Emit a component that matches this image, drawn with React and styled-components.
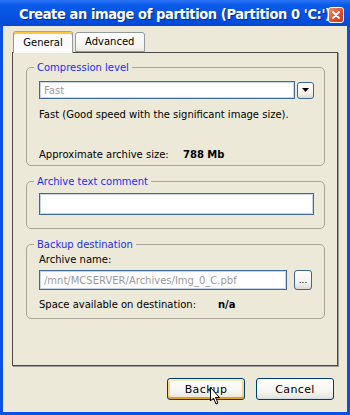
import React from "react";
import styled, { createGlobalStyle } from "styled-components";

const GlobalStyle = createGlobalStyle`
  html, body { margin: 0; padding: 0; width: 350px; height: 415px; overflow: hidden; background: #ECE9D8; }
  body { font-family: "DejaVu Sans", Verdana, sans-serif; font-size: 10px; color: #000; }
  * { box-sizing: border-box; }
`;

const Window = styled.div`
  width: 350px;
  height: 415px;
  display: flex;
  flex-direction: column;
`;

const TitleBar = styled.div`
  height: 26px;
  flex: none;
  display: flex;
  align-items: center;
  padding: 0 6px 0 19px;
  background: linear-gradient(180deg, #2a72f6 0%, #0a5ae8 20%, #0450e0 70%, #0348d4 100%);
`;

const TitleText = styled.div`
  flex: 1;
  min-width: 0;
  overflow: hidden;
  white-space: nowrap;
  color: #fff;
  font-family: "DejaVu Sans Condensed", "DejaVu Sans", sans-serif;
  font-weight: bold;
  font-size: 14.5px;
  letter-spacing: -0.4px;
  text-shadow: 1px 1px 0 #0a2a8a;
  margin-top: 2px;
`;

const CloseBtn = styled.div`
  flex: none;
  width: 16px;
  height: 16px;
  margin-left: -6px;
  margin-top: 4px;
  border-radius: 3px;
  border: 1px solid #fff;
  background: linear-gradient(135deg, #f3906c 0%, #e2532c 50%, #c9361a 100%);
  display: flex;
  align-items: center;
  justify-content: center;
`;

const Body = styled.div`
  flex: 1;
  display: flex;
  flex-direction: column;
  border: 3px solid #0a50e4;
  border-top: none;
  padding: 5px 9px 12px 9px;
  background: #ECE9D8;
`;

const TabRow = styled.div`
  display: flex;
  align-items: flex-end;
  gap: 2px;
  padding-left: 1px;
  height: 21px;
  position: relative;
  z-index: 1;
`;

const Tab = styled.div`
  height: ${p => (p.$active ? "22px" : "20px")};
  margin-bottom: ${p => (p.$active ? "-1px" : "0")};
  padding: ${p => (p.$active ? "4px 9px 0 9px" : "2px 11px 0 9px")};
  width: ${p => p.$w}px;
  border: 1px solid #919b9c;
  border-bottom: ${p => (p.$active ? "none" : "1px solid #919b9c")};
  border-radius: 3px 3px 0 0;
  background: ${p => (p.$active ? "#fcfcfe" : "linear-gradient(180deg, #ffffff 0%, #f4f3ee 80%, #e8e6dc 100%)")};
  box-shadow: ${p => (p.$active ? "inset 0 2px 0 #ffc83c" : "none")};
  border-top-color: ${p => (p.$active ? "#e6a00f" : "#919b9c")};
  font-size: 10px;
  line-height: 13px;
  text-align: center;
`;

const Panel = styled.div`
  height: 314px;
  flex: none;
  border: 1px solid #4a4a4a;
  box-shadow: 1px 1px 0 #9a9a9a;
  background: #ECE9D8;
  padding: 8px 12px 0 13px;
  display: flex;
  flex-direction: column;
  gap: 9px;
`;

const Group = styled.fieldset`
  margin: 0;
  min-width: 0;
  border: 1px solid #a8a597;
  border-radius: 5px;
  padding: ${p => p.$pad};
  display: flex;
  flex-direction: column;
`;

const Legend = styled.legend`
  color: #1c2ef0;
  padding: 0 3px;
  margin-left: -5px;
  line-height: 13px;
  font-size: 10px;
`;

const Row = styled.div`
  display: flex;
  align-items: center;
  gap: ${p => p.$gap || 0}px;
  margin-top: ${p => p.$mt || 0}px;
`;

const Label = styled.div`
  line-height: 13px;
  white-space: nowrap;
  margin-top: ${p => p.$mt || 0}px;
  width: ${p => (p.$w ? p.$w + "px" : "auto")};
  font-weight: ${p => (p.$bold ? "bold" : "normal")};
  flex: none;
`;

const Field = styled.div`
  flex: ${p => (p.$block ? "none" : "1")};
  min-width: 0;
  height: ${p => p.$h}px;
  border: 1px solid #7f9db9;
  background: #fff;
  color: #9a9a9a;
  padding: 0 4px;
  display: flex;
  align-items: center;
  white-space: nowrap;
  overflow: hidden;
  ${p => p.$focus && "box-shadow: inset 0 0 0 1px #c6d6ea; border-color: #3e6a9c;"}
`;

const SmallBtn = styled.div`
  flex: none;
  width: ${p => p.$w}px;
  height: ${p => p.$h}px;
  border: 1px solid #3a6896;
  border-radius: 3px;
  background: linear-gradient(180deg, #ffffff 0%, #f2f1ea 70%, #dcdad0 100%);
  display: flex;
  align-items: center;
  justify-content: center;
  font-size: 9px;
  line-height: 1;
`;

const Footer = styled.div`
  display: flex;
  justify-content: flex-end;
  gap: 11px;
  margin-top: 12px;
  padding-right: 4px;
`;

const Button = styled.div`
  position: relative;
  width: 78px;
  height: 22px;
  border: 1px solid #003c74;
  border-radius: 3px;
  background: linear-gradient(180deg, #ffffff 0%, #f6f5f0 60%, #e6e3d6 100%);
  display: flex;
  align-items: center;
  justify-content: center;
  font-size: 11px;
  letter-spacing: 0.4px;
  box-shadow: ${p => (p.$hot ? "inset 0 -2px 0 #e5a01a, inset 0 2px 0 #fde9b6, inset 2px 0 0 #f9d58a, inset -2px 0 0 #f9d58a" : "inset 0 -1px 0 #cfd9e8")};
`;

const Cursor = styled.svg`
  position: absolute;
  left: 42px;
  top: 8px;
  width: 11px;
  height: 18px;
`;

export default function App() {
  return (
    <Window>
      <GlobalStyle />
      <TitleBar>
        <TitleText>Create an image of partition (Partition 0 'C:')</TitleText>
        <CloseBtn>
          <svg width="10" height="10" viewBox="0 0 10 10">
            <path d="M2 2 L8 8 M8 2 L2 8" stroke="#fff" strokeWidth="1.8" strokeLinecap="round" />
          </svg>
        </CloseBtn>
      </TitleBar>
      <Body>
        <TabRow>
          <Tab $active $w={60}>General</Tab>
          <Tab $w={70}>Advanced</Tab>
        </TabRow>
        <Panel>
          <Group $pad="7px 10px 4px 12px">
            <Legend>Compression level</Legend>
            <Row $gap={2}>
              <Field $h={18} $focus>Fast</Field>
              <SmallBtn $w={17} $h={17}>
                <svg width="7" height="4" viewBox="0 0 7 4"><path d="M0 0 H7 L3.5 4 Z" fill="#000" /></svg>
              </SmallBtn>
            </Row>
            <Label $mt={9}>Fast (Good speed with the significant image size).</Label>
            <Row $mt={27}>
              <Label $w={144}>Approximate archive size:</Label>
              <Label $bold>788 Mb</Label>
            </Row>
          </Group>
          <Group $pad="5px 10px 13px 12px">
            <Legend>Archive text comment</Legend>
            <Field $block $h={22} $focus />
          </Group>
          <Group $pad="2px 12px 7px 12px">
            <Legend>Backup destination</Legend>
            <Label>Archive name:</Label>
            <Row $gap={7} $mt={4}>
              <Field $h={20} $focus>/mnt/MCSERVER/Archives/Img_0_C.pbf</Field>
              <SmallBtn $w={18} $h={20}>...</SmallBtn>
            </Row>
            <Row $mt={8}>
              <Label $w={179}>Space available on destination:</Label>
              <Label $bold>n/a</Label>
            </Row>
          </Group>
        </Panel>
        <Footer>
          <Button $hot>
            Backup
            <Cursor viewBox="0 0 11 18">
              <path d="M0.5 0.5 L0.5 14 L3.5 11 L6 17 L8 16 L5.5 10.5 L9.5 10.5 Z" fill="#fff" stroke="#000" strokeWidth="1" strokeLinejoin="round" />
            </Cursor>
          </Button>
          <Button>Cancel</Button>
        </Footer>
      </Body>
    </Window>
  );
}
